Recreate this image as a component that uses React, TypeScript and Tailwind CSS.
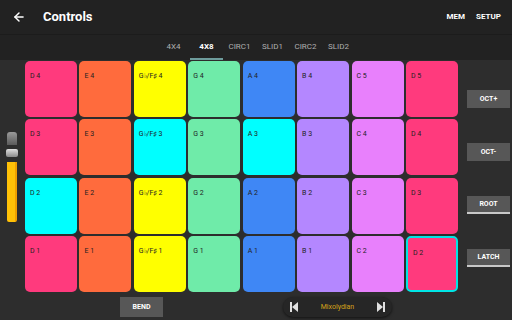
import { ArrowLeft } from 'lucide-react'

const pink = 'bg-[#ff3a7d]'
const orange = 'bg-[#ff6b3d]'
const yellow = 'bg-[#ffff00]'
const mint = 'bg-[#6feba9]'
const blue = 'bg-[#3f87f5]'
const purple = 'bg-[#b487ff]'
const violet = 'bg-[#e880fc]'
const cyan = 'bg-[#00ffff]'

type Pad = { label: string; color: string; active?: boolean }

const rows: Pad[][] = [
    [
        { label: 'D 4', color: pink }, { label: 'E 4', color: orange }, { label: 'G♭/F♯ 4', color: yellow }, { label: 'G 4', color: mint },
        { label: 'A 4', color: blue }, { label: 'B 4', color: purple }, { label: 'C 5', color: violet }, { label: 'D 5', color: pink },
    ],
    [
        { label: 'D 3', color: pink }, { label: 'E 3', color: orange }, { label: 'G♭/F♯ 3', color: cyan }, { label: 'G 3', color: mint },
        { label: 'A 3', color: cyan }, { label: 'B 3', color: purple }, { label: 'C 4', color: violet }, { label: 'D 4', color: pink },
    ],
    [
        { label: 'D 2', color: cyan }, { label: 'E 2', color: orange }, { label: 'G♭/F♯ 2', color: yellow }, { label: 'G 2', color: mint },
        { label: 'A 2', color: blue }, { label: 'B 2', color: purple }, { label: 'C 3', color: violet }, { label: 'D 3', color: pink },
    ],
    [
        { label: 'D 1', color: pink }, { label: 'E 1', color: orange }, { label: 'G♭/F♯ 1', color: yellow }, { label: 'G 1', color: mint },
        { label: 'A 1', color: blue }, { label: 'B 1', color: purple }, { label: 'C 2', color: violet }, { label: 'D 2', color: pink, active: true },
    ],
]

const tabs = ['4X4', '4X8', 'CIRC1', 'SLID1', 'CIRC2', 'SLID2']

const SideButton = ({ label, underline }: { label: string; underline?: boolean }) => (
    <div className={`w-[43px] h-[18px] bg-[#575757] flex items-center justify-center text-[7px] font-bold text-white ${underline ? 'border-b-2 border-[#c8c8c8]' : ''}`}>
        {label}
    </div>
)

const SkipIcon = ({ dir }: { dir: 'prev' | 'next' }) => (
    <svg width="8" height="10" viewBox="0 0 8 10">
        {dir === 'prev' ? (
            <>
                <rect x="0" y="0" width="2" height="10" fill="#e0e0e0" />
                <polygon points="8,0 8,10 2,5" fill="#e0e0e0" />
            </>
        ) : (
            <>
                <polygon points="0,0 0,10 6,5" fill="#e0e0e0" />
                <rect x="6" y="0" width="2" height="10" fill="#e0e0e0" />
            </>
        )}
    </svg>
)

export default function App() {
    return (
        <div className="w-[512px] h-[320px] bg-[#2d2d2d] flex flex-col overflow-hidden" style={{ fontFamily: 'Roboto, "Liberation Sans", sans-serif' }}>
            <div className="h-[35px] bg-[#222222] flex items-center text-white border-b border-[#1c1c1c]">
                <ArrowLeft size={14} strokeWidth={2.5} className="ml-[12px]" />
                <span className="ml-[17px] text-[13px] font-bold">Controls</span>
                <div className="ml-auto mr-[11px] flex gap-[11px] text-[8px] font-bold">
                    <span>MEM</span>
                    <span>SETUP</span>
                </div>
            </div>

            <div className="h-[25px] bg-[#222222] flex justify-center">
                {tabs.map((t) => (
                    <div key={t} className={`w-[33px] flex items-center justify-center text-[8px] ${t === '4X8' ? 'text-white font-bold border-b-2 border-[#6e9c9c]' : 'text-[#b0b0b0] border-b-2 border-transparent'}`}>
                        {t}
                    </div>
                ))}
            </div>

            <div className="flex flex-1">
                <div className="w-[25px] flex flex-col items-start pl-[7px] pt-[72px]">
                    <div className="w-[10px] h-[13px] rounded-t-[3px] bg-gradient-to-b from-[#9a9a9a] to-[#5a5a5a]" />
                    <div className="w-[12px] h-[8px] -ml-[1px] mt-[4px] rounded-[2px] bg-gradient-to-b from-[#e0e0e0] to-[#8a8a8a]" />
                    <div className="w-[10px] h-[60px] mt-[5px] rounded-b-[2px] bg-[#ffc107] border-r-2 border-[#f0a000]" />
                </div>

                <div className="flex flex-col">
                    <div className="w-[433px] h-[231px] mt-[1px] grid grid-cols-8 grid-rows-4 gap-[2.4px]">
                        {rows.flat().map((p, i) => (
                            <div
                                key={i}
                                className={`${p.color} rounded-[5px] pl-[5px] pt-[11px] text-[7px] leading-[8px] text-[#222] ${p.active ? 'border-2 border-[#00e5e5] pl-[3px] pt-[9px]' : ''}`}
                            >
                                {p.label}
                            </div>
                        ))}
                    </div>
                    <div className="flex items-center mt-[5px]">
                        <div className="ml-[95px] w-[43px] h-[20px] bg-[#575757] flex items-center justify-center text-[7px] font-bold text-white">
                            BEND
                        </div>
                        <div className="ml-[120px] w-[109px] h-[20px] rounded-full bg-[#262626] shadow-[0_1px_3px_rgba(0,0,0,0.6)] flex items-center justify-between px-[7px]">
                            <SkipIcon dir="prev" />
                            <span className="text-[7px] text-[#d4a21a]">Mixolydian</span>
                            <SkipIcon dir="next" />
                        </div>
                    </div>
                </div>

                <div className="flex-1 flex flex-col items-end pr-[2px] pt-[30px] gap-[35px]">
                    <SideButton label="OCT+" />
                    <SideButton label="OCT-" />
                    <SideButton label="ROOT" underline />
                    <SideButton label="LATCH" underline />
                </div>
            </div>
        </div>
    )
}
